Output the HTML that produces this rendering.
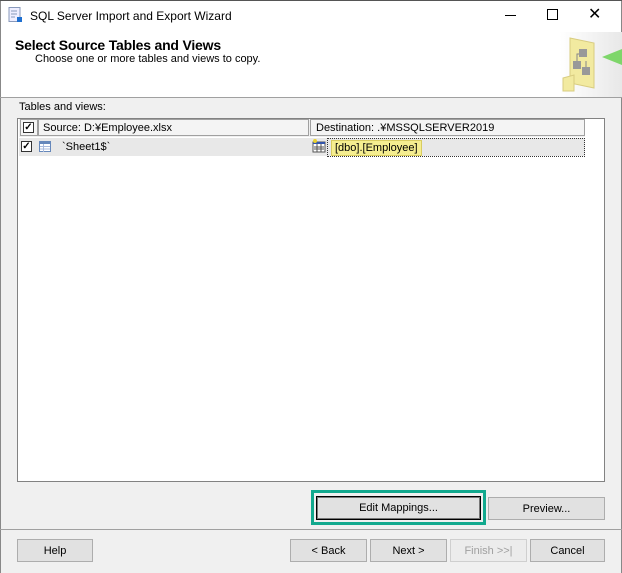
<!DOCTYPE html>
<html><head><style>
*{margin:0;padding:0;box-sizing:border-box}
body{width:622px;height:573px;overflow:hidden;background:#f0f0f0;font-family:"Liberation Sans",sans-serif;font-size:11px;color:#000;position:relative}
.a{position:absolute}
.btn{position:absolute;background:#e1e1e1;border:1px solid #adadad;text-align:center;line-height:22px;font-size:11px}
.cb{position:absolute;width:11px;height:11px;border:1px solid #333;background:#fff;font-size:10px;line-height:9px;text-align:center;font-weight:bold}
</style></head><body>
<div class="a" style="left:0;top:0;width:622px;height:97px;background:#fff"></div>
<div class="a" style="left:0;top:0;width:1px;height:573px;background:#888"></div>
<div class="a" style="right:0;top:0;width:1px;height:573px;background:#888"></div>
<div class="a" style="left:0;top:0;width:622px;height:1px;background:#555"></div>
<svg class="a" style="left:8px;top:7px" width="16" height="16"><rect x="1" y="0.5" width="11" height="14" fill="#eef" stroke="#8899bb"/><rect x="9" y="10" width="5" height="5" fill="#1e6fd0"/><path d="M3 4h6M3 7h6M3 10h4" stroke="#8899bb"/></svg>
<div class="a" style="left:30px;top:9px;font-size:12px">SQL Server Import and Export Wizard</div>
<div class="a" style="left:505px;top:15px;width:11px;height:1px;background:#000"></div>
<div class="a" style="left:547px;top:9px;width:11px;height:11px;border:1px solid #000"></div>
<div class="a" style="left:588px;top:4px;font-size:16px">✕</div>
<div class="a" style="left:560px;top:32px;width:62px;height:65px;background:linear-gradient(90deg,#fff,#e8e8e8)"></div>
<svg class="a" style="left:560px;top:35px" width="62" height="60"><polygon points="10,3 34,8 34,53 10,48" fill="#f2eaa0" stroke="#d8cc80"/><polygon points="3,43 14,40 14,56 3,56" fill="#f2eaa0" stroke="#d8cc80"/><rect x="19" y="14" width="8" height="8" fill="#999"/><rect x="13" y="26" width="8" height="8" fill="#999"/><rect x="22" y="32" width="8" height="8" fill="#999"/><path d="M17 26v-7h2M26 32v-6" stroke="#888" fill="none"/><polygon points="42,22 62,14 62,30" fill="#7ed66a"/></svg>
<div class="a" style="left:15px;top:37px;font-size:14px;font-weight:bold;letter-spacing:-0.2px">Select Source Tables and Views</div>
<div class="a" style="left:35px;top:53px;font-size:11px">Choose one or more tables and views to copy.</div>
<div class="a" style="left:0;top:97px;width:622px;height:1px;background:#a0a0a0"></div>
<div class="a" style="left:19px;top:101px">Tables and views:</div>
<div class="a" style="left:17px;top:118px;width:588px;height:364px;background:#fff;border:1px solid #828282"></div>
<div class="a" style="left:19px;top:119px;width:566px;height:18px;background:#f0f0f0"></div>
<div class="a" style="left:20px;top:119px;width:18px;height:17px;border:1px solid #a0a0a0;background:#f4f4f4"></div>
<div class="cb" style="left:23px;top:122px">✓</div>
<div class="a" style="left:38px;top:119px;width:271px;height:17px;border:1px solid #a0a0a0;background:#f4f4f4;padding:2px 4px">Source: D:¥Employee.xlsx</div>
<div class="a" style="left:310px;top:119px;width:275px;height:17px;border:1px solid #a0a0a0;background:#f4f4f4;padding:2px 5px">Destination: .¥MSSQLSERVER2019</div>
<div class="a" style="left:19px;top:138px;width:566px;height:18px;background:#e8e8e8"></div>
<div class="cb" style="left:21px;top:141px">✓</div>
<svg class="a" style="left:39px;top:141px" width="12" height="11"><rect x=".5" y=".5" width="11" height="10" fill="#fff" stroke="#6688bb"/><rect x="1" y="1" width="10" height="2" fill="#6688bb"/><path d="M1 5.5h10M1 8h10M4.5 3v8" stroke="#aabbdd"/></svg>
<div class="a" style="left:62px;top:141px">`Sheet1$`</div>
<svg class="a" style="left:312px;top:139px" width="14" height="14"><rect x="1" y="3" width="12" height="10" fill="#fff" stroke="#555"/><rect x="1" y="3" width="12" height="2" fill="#3355aa"/><path d="M2 8h10M2 10h10M5 5v8M9 5v8" stroke="#555"/><circle cx="3" cy="2" r="2" fill="#e8d030"/></svg>
<div class="a" style="left:327px;top:138px;width:258px;height:19px;border:1px dotted #333"></div>
<div class="a" style="left:331px;top:140px;padding:1px 3px;background:#f5ee90;border:1px solid #d8cc60;line-height:12px">[dbo].[Employee]</div>
<div class="a" style="left:311px;top:490px;width:175px;height:35px;border:3px solid #12a98e"></div>
<div class="btn" style="left:316px;top:496px;width:165px;height:24px;border:1px solid #000;box-shadow:inset 0 0 0 1px #777">Edit Mappings...</div>
<div class="btn" style="left:488px;top:497px;width:117px;height:23px">Preview...</div>
<div class="a" style="left:0;top:529px;width:622px;height:1px;background:#a0a0a0"></div>
<div class="btn" style="left:17px;top:539px;width:76px;height:23px">Help</div>
<div class="btn" style="left:290px;top:539px;width:77px;height:23px">&lt; Back</div>
<div class="btn" style="left:370px;top:539px;width:77px;height:23px">Next &gt;</div>
<div class="btn" style="left:450px;top:539px;width:77px;height:23px;color:#a0a0a0;background:#ececec;border-color:#cfcfcf">Finish &gt;&gt;|</div>
<div class="btn" style="left:530px;top:539px;width:75px;height:23px">Cancel</div>
</body></html>
